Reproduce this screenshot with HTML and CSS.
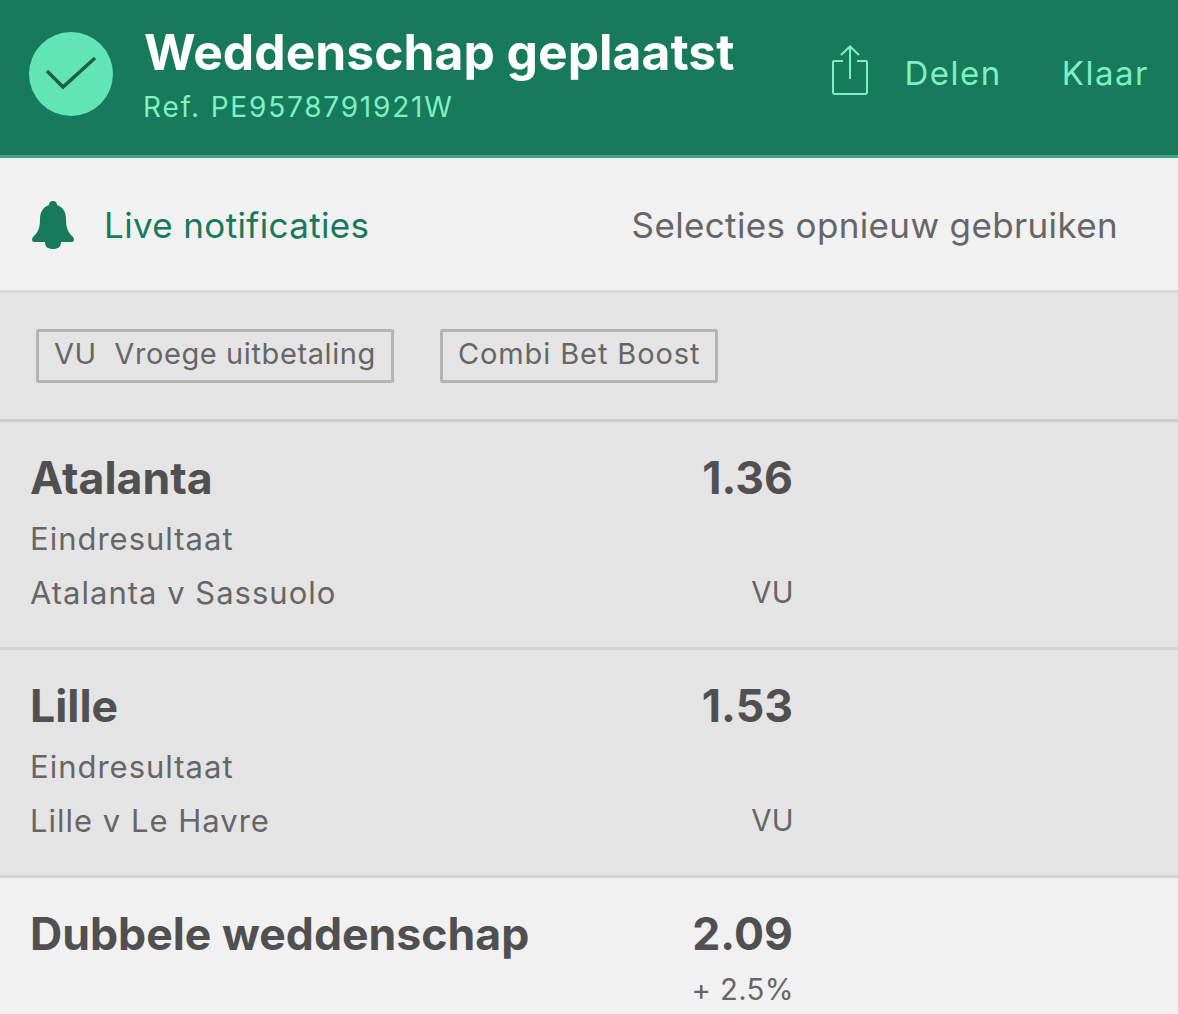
FILE: index.html
```html
<!DOCTYPE html>
<html>
<head>
  <meta charset="UTF-8">
  <link rel="stylesheet" href="styles.css">
</head>
<body>
  <!-- Confirmation header -->
  <header class="header">
    <div class="check-circle">
      <svg width="54" height="42" viewBox="0 0 54 42" fill="none" stroke="#1d5c48" stroke-width="3.500">
        <path d="M3 18 L19 34 L51 5"/>
      </svg>
    </div>
    <div class="header-text">
      <div class="header-title">Weddenschap geplaatst</div>
      <div class="header-ref">Ref. PE9578791921W</div>
    </div>
    <div class="header-share">
      <svg width="38" height="50" viewBox="0 0 38 50" fill="none" stroke="#7ff0c4" stroke-width="2">
        <path d="M12 16 H3 Q2 16 2 17 V47 Q2 49 4 49 H34 Q36 49 36 47 V17 Q36 16 35 16 H26"/>
        <path d="M19 34 V2 M10 10 L19 1.500 L28 10"/>
      </svg>
      <span class="header-action">Delen</span>
    </div>
    <span class="header-action header-done">Klaar</span>
  </header>

  <!-- Notifications row -->
  <div class="notify-row">
    <div class="notify-live">
      <svg width="42" height="48" viewBox="0 0 42 48" fill="#177a5a">
        <path d="M21 0 C24 0 25 2 25 4 C31 6 34 11 34 18 C34 27 36 31 40 35 C42 37 42 38 42 39 Q41.500 41 40 41 H29 C29 46 26 48 21 48 C16 48 13 46 13 41 H2 Q0.500 41 0 39 C0 38 0 37 2 35 C6 31 8 27 8 18 C8 11 11 6 17 4 C17 2 18 0 21 0 Z"/>
      </svg>
      <span>Live notificaties</span>
    </div>
    <span class="notify-reuse">Selecties opnieuw gebruiken</span>
  </div>

  <!-- Bet tags -->
  <div class="tags-row">
    <span class="tag">VU&nbsp; Vroege uitbetaling</span>
    <span class="tag tag-boost">Combi Bet Boost</span>
  </div>

  <!-- Selections -->
  <div class="selection">
    <div class="line line-main"><span>Atalanta</span><span class="line-value">1.36</span></div>
    <div class="line line-sub"><span>Eindresultaat</span></div>
    <div class="line line-sub"><span>Atalanta v Sassuolo</span><span class="line-note">VU</span></div>
  </div>
  <div class="selection">
    <div class="line line-main"><span>Lille</span><span class="line-value">1.53</span></div>
    <div class="line line-sub"><span>Eindresultaat</span></div>
    <div class="line line-sub"><span>Lille v Le Havre</span><span class="line-note">VU</span></div>
  </div>

  <!-- Total -->
  <div class="total">
    <div class="line line-main"><span>Dubbele weddenschap</span><span class="line-value">2.09</span></div>
    <div class="line line-sub"><span></span><span class="line-note">+ 2.5%</span></div>
  </div>
</body>
</html>
```

FILE: styles.css
```css
html, body {
  margin: 0;
  height: 1014px;
  overflow: hidden;
}
body {
  background: #f1f1f1;
  font-family: Inter, "Noto Sans", sans-serif;
  color: #666;
}
.header {
  display: flex;
  align-items: flex-start;
  height: 155px;
  background: #177a5a;
  border-bottom: 3px solid #47a585;
}
.check-circle {
  display: flex;
  align-items: center;
  justify-content: center;
  width: 84px;
  height: 84px;
  margin: 32px 0 0 29px;
  border-radius: 50%;
  background: #62e5b6;
}
.header-text {
  margin: 22px 0 0 31px;
  flex: 1;
}
.header-title {
  font-size: 49.800px;
  line-height: 60px;
  font-weight: 700;
  color: #fff;
}
.header-ref {
  margin: 5px 0 0 -1px;
  font-size: 28px;
  line-height: 40px;
  letter-spacing: 1.800px;
  color: #7ff0c4;
}
.header-share {
  display: flex;
  align-items: flex-start;
  gap: 36px;
  margin-top: 45px;
}
.header-share .header-action {
  margin-top: 3px;
}
.header-action {
  font-size: 33px;
  line-height: 50px;
  letter-spacing: 1.500px;
  color: #7ff0c4;
}
.header-done {
  margin: 48px 29px 0 60px;
}
.notify-row {
  display: flex;
  align-items: center;
  justify-content: space-between;
  height: 130px;
  padding: 2px 60px 0 32px;
  border-bottom: 3px solid #d8d8d8;
  font-size: 35px;
  letter-spacing: 0.360px;
}
.notify-live {
  display: flex;
  align-items: center;
  gap: 30px;
  color: #177a5a;
}
.tags-row {
  display: flex;
  align-items: flex-start;
  gap: 46px;
  height: 129px;
  padding-left: 36px;
  background: #e4e4e4;
  border-bottom: 3px solid #cfcfcf;
  box-sizing: border-box;
}
.tag {
  margin-top: 36px;
  padding: 0 15px;
  border: 3px solid #b4b4b4;
  border-radius: 2px;
  font-size: 29px;
  line-height: 44px;
  height: 48px;
  letter-spacing: 0.600px;
}
.tag-boost {
  letter-spacing: 0.900px;
}
.selection {
  height: 197px;
  padding: 28px 385px 0 30px;
  background: #e4e4e4;
  border-bottom: 3px solid #d4d4d4;
}
.total {
  padding: 28px 385px 0 30px;
}
.line {
  display: flex;
  justify-content: space-between;
}
.line-main {
  font-size: 44.600px;
  line-height: 56px;
  font-weight: 700;
  color: #505050;
}
.line-sub {
  font-size: 31px;
  line-height: 54px;
  letter-spacing: 1px;
}
.line-sub:nth-child(2) {
  margin-top: 6px;
}
.total .line-sub:nth-child(2) {
  margin-top: 1px;
}
.line-note {
  margin-right: -1px;
  font-size: 29.300px;
  letter-spacing: 0.400px;
}
```
